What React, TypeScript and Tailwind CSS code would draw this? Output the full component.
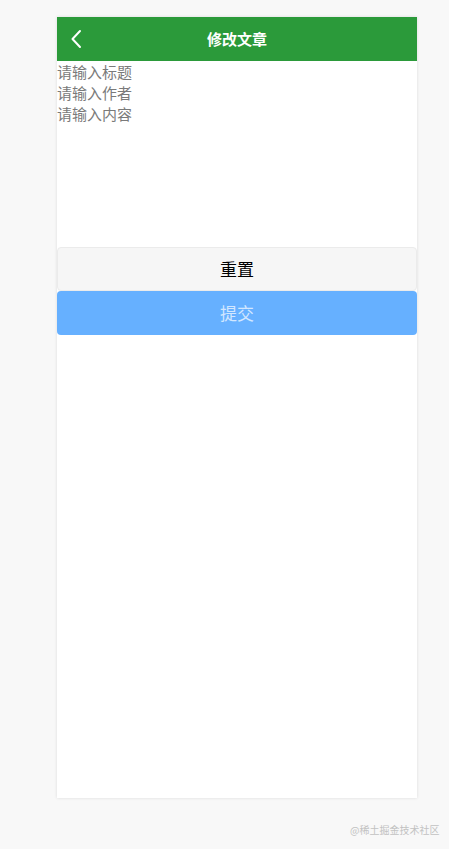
import React from "react";

export default function App() {
  const font = { fontFamily: '"Microsoft YaHei", "Noto Sans CJK SC", sans-serif' };
  return (
    <div className="relative w-[449px] h-[849px] bg-[#f8f8f8]" style={font}>
      <div className="absolute left-[57px] top-[17px] w-[360px] h-[781px] bg-white shadow-[0_0_3px_rgba(0,0,0,0.12)] flex flex-col">
        <div className="h-[44px] bg-[#2b9a3a] flex items-center relative">
          <svg className="absolute left-[13px] top-[12px]" width="12" height="20" viewBox="0 0 12 20" fill="none">
            <path d="M10 2 L2.5 10 L10 18" stroke="white" strokeWidth="2" strokeLinecap="round" strokeLinejoin="round" />
          </svg>
          <div className="w-full text-center text-white text-[15px] font-bold">修改文章</div>
        </div>
        <div className="flex flex-col text-[15px] leading-[21px] text-[#7a7a7a]">
          <div>请输入标题</div>
          <div>请输入作者</div>
          <div className="h-[145px]">请输入内容</div>
        </div>
        <div className="h-[44px] mt-[-1px] rounded-[4px] border border-[#ebebeb] bg-[#f6f6f6] flex items-center justify-center text-[17px] font-normal text-black">
          重置
        </div>
        <div className="h-[44px] rounded-[4px] bg-[#66b0ff] flex items-center justify-center text-[17px] text-[#d2e7ff]">
          提交
        </div>
      </div>
      <div className="absolute left-[350px] top-[822px] text-[10px] text-[#c2c2c2]">@稀土掘金技术社区</div>
    </div>
  );
}
